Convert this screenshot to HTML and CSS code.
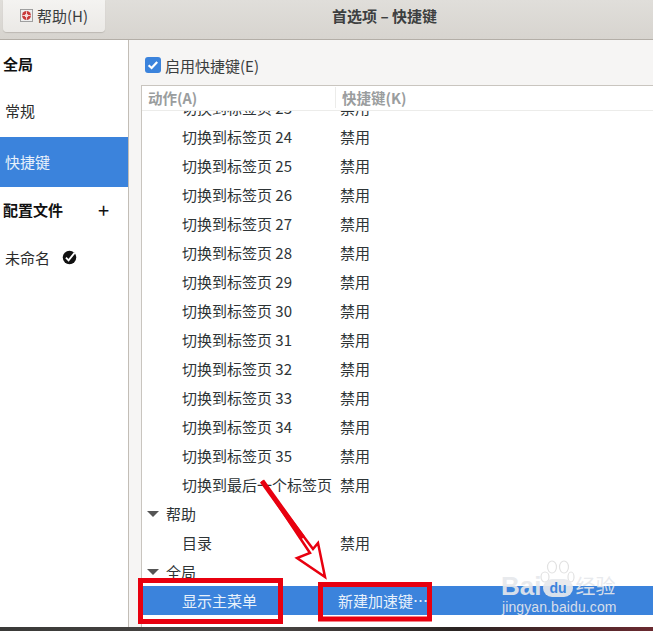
FILE: index.html
```html
<!DOCTYPE html>
<html lang="zh">
<head>
<meta charset="utf-8">
<title>首选项 – 快捷键</title>
<link rel="stylesheet" href="styles.css">
</head>
<body>
<div class="window">
  <header class="titlebar">
    <button class="help-btn">
      <svg class="help-icon" viewBox="0 0 14 14" width="14" height="14">
        <rect x="0.5" y="0.5" width="13" height="13" fill="#eee" stroke="#999"/>
        <circle cx="7" cy="7" r="4.8" fill="#c83a3a"/>
        <circle cx="7" cy="7" r="2" fill="#f4dada"/>
        <path d="M2.5 7h9M7 2.5v9" stroke="#f4dada" stroke-width="1"/>
      </svg>
      <span>帮助(H)</span>
    </button>
    <div class="title">首选项 – 快捷键</div>
  </header>
  <div class="main">
    <nav class="sidebar">
      <div class="side-head">全局</div>
      <div class="side-item general">常规</div>
      <div class="side-item selected">快捷键</div>
      <div class="side-head profile"><span>配置文件</span><span class="plus">+</span></div>
      <div class="side-item default">
        <span>未命名</span>
        <svg viewBox="0 0 16 16" width="15" height="15">
          <circle cx="8" cy="8" r="7.2" fill="#111"/>
          <path d="M4.2 8.2l2.8 2.8 6.4-8" fill="none" stroke="#fff" stroke-width="2"/>
        </svg>
      </div>
    </nav>
    <section class="content">
      <label class="enable">
        <span class="check">
          <svg viewBox="0 0 16 16" width="16" height="16"><path d="M3.6 8.2l3 2.8 5.6-6" fill="none" stroke="#fff" stroke-width="2.2"/></svg>
        </span>
        <span>启用快捷键(E)</span>
      </label>
      <div class="list">
        <div class="list-head">
          <div class="col-a">动作(A)</div>
          <div class="col-b">快捷键(K)</div>
        </div>
        <div class="list-body">
          <div class="rows">
            <div class="row"><span class="action">切换到标签页 23</span><span>禁用</span></div>
            <div class="row"><span class="action">切换到标签页 24</span><span>禁用</span></div>
            <div class="row"><span class="action">切换到标签页 25</span><span>禁用</span></div>
            <div class="row"><span class="action">切换到标签页 26</span><span>禁用</span></div>
            <div class="row"><span class="action">切换到标签页 27</span><span>禁用</span></div>
            <div class="row"><span class="action">切换到标签页 28</span><span>禁用</span></div>
            <div class="row"><span class="action">切换到标签页 29</span><span>禁用</span></div>
            <div class="row"><span class="action">切换到标签页 30</span><span>禁用</span></div>
            <div class="row"><span class="action">切换到标签页 31</span><span>禁用</span></div>
            <div class="row"><span class="action">切换到标签页 32</span><span>禁用</span></div>
            <div class="row"><span class="action">切换到标签页 33</span><span>禁用</span></div>
            <div class="row"><span class="action">切换到标签页 34</span><span>禁用</span></div>
            <div class="row"><span class="action">切换到标签页 35</span><span>禁用</span></div>
            <div class="row"><span class="action">切换到最后一个标签页</span><span>禁用</span></div>
            <div class="row group"><i class="tri"></i><span>帮助</span></div>
            <div class="row"><span class="action">目录</span><span>禁用</span></div>
            <div class="row group"><i class="tri"></i><span>全局</span></div>
            <div class="row active"><span class="action">显示主菜单</span><span class="accel">新建加速键…</span></div>
          </div>
        </div>
      </div>
    </section>
  </div>
  <div class="desktop"></div>
</div>

<svg class="annot" viewBox="0 0 653 631" width="653" height="631">
  <rect x="140.5" y="580.5" width="140" height="41" fill="none" stroke="#e8000f" stroke-width="5"/>
  <rect x="320.5" y="584.5" width="109" height="34.5" fill="none" stroke="#e8000f" stroke-width="5"/>
  <path d="M262 481 L310 553 L297 558 L325 577 L318 543 L313 549 Z" fill="#fff" fill-opacity="0.7" stroke="#e8000f" stroke-width="2.5"/>
  <path d="M262 481 L303 538" stroke="#e8000f" stroke-width="5"/>
</svg>

<div class="watermark">
  <svg class="paw" viewBox="0 0 36 24" width="36" height="24">
    <g fill="none" stroke="#e2e2e2" stroke-width="1.2">
      <ellipse cx="6" cy="17" rx="4" ry="5"/>
      <ellipse cx="13" cy="7" rx="4.5" ry="6"/>
      <ellipse cx="25" cy="7" rx="4.5" ry="6"/>
      <ellipse cx="32" cy="17" rx="3" ry="5"/>
    </g>
  </svg>
  <div class="wm-brand"><b>Bai</b><span class="wm-du">du</span><span class="wm-cn">经验</span></div>
  <div class="wm-url">jingyan.baidu.com</div>
</div>
</body>
</html>
```
FILE: styles.css
```css
* { box-sizing: border-box; }
html, body { margin: 0; padding: 0; }
body {
  width: 653px;
  height: 631px;
  overflow: hidden;
  position: relative;
  font-family: "Noto Sans CJK SC", "Noto Sans", sans-serif;
  font-size: 15px;
  color: #2e3436;
  background: #fff;
}
.window { display: flex; flex-direction: column; height: 631px; }
.titlebar {
  height: 40px;
  flex: none;
  display: flex;
  background: linear-gradient(#e0deda, #d7d4cf);
  border-bottom: 1px solid #b3aea7;
  position: relative;
}
.help-btn {
  width: 102px;
  height: 32px;
  margin-left: 3px;
  display: flex;
  align-items: center;
  gap: 4px;
  padding: 0 0 2px 17px;
  border: 0;
  border-radius: 0 0 4px 4px;
  background: linear-gradient(#f4f3f1, #ebe9e6);
  box-shadow: 0 1px 1px #bdb9b3;
  font: inherit;
  color: #3a3d3e;
}
.help-icon { flex: none; width: 13px; height: 13px; }
.title {
  position: absolute;
  left: 116px;
  right: 0;
  top: 6px;
  text-align: center;
  font-weight: 700;
  font-size: 15px;
  line-height: 20px;
  color: #3d3f40;
}
.main { flex: 1; display: flex; min-height: 0; }
.sidebar {
  width: 129px;
  flex: none;
  background: #fff;
  border-right: 1px solid #c2bdb6;
  color: #2b2b2b;
}
.side-head {
  height: 48px;
  padding: 0 4px 2px 3px;
  display: flex;
  align-items: center;
  font-weight: 700;
  color: #111;
}
.side-item {
  height: 49px;
  padding: 0 5px 2px;
  display: flex;
  align-items: center;
}
.side-item.general { padding-bottom: 4px; }
.side-item.selected { height: 50px; background: #3b83dc; color: #e8f1fb; }
.side-head.profile { height: 47px; justify-content: space-between; padding-right: 19px; }
.plus { font-size: 20px; font-weight: 400; line-height: 1; }
.side-item.default { gap: 12px; height: 48px; }
.default svg { margin-top: 1px; }
.content {
  flex: 1;
  min-width: 0;
  background: #f6f5f4;
  padding: 0 0 0 12px;
  display: flex;
  flex-direction: column;
}
.enable {
  height: 45px;
  flex: none;
  display: flex;
  align-items: center;
  gap: 4px;
  padding: 5px 0 0 4px;
  color: #3a3d3e;
}
.check {
  width: 16px;
  height: 16px;
  border-radius: 3px;
  background: #3b83dc;
  display: block;
}
.check svg { display: block; }
.list {
  flex: 1;
  min-height: 0;
  display: flex;
  flex-direction: column;
  background: #fff;
  border-left: 1px solid #c9c5bf;
  border-top: 1px solid #c9c5bf;
}
.list-head {
  height: 25px;
  flex: none;
  display: flex;
  align-items: center;
  padding-bottom: 2px;
  border-bottom: 1px solid #ececea;
  font-weight: 700;
  font-size: 14.5px;
  color: #9a9d9e;
}
.col-a { width: 194px; padding-left: 6px; border-right: 1px solid #ececea; }
.col-b { padding-left: 6px; }
.list-body { flex: 1; min-height: 0; overflow: hidden; }
.rows { margin-top: -18px; }
.row {
  height: 29px;
  display: flex;
  align-items: center;
  color: #2e3436;
}
.action { width: 198px; padding-left: 40px; flex: none; white-space: nowrap; }
.group { padding-left: 5px; gap: 7px; }
.tri {
  display: block;
  width: 0;
  height: 0;
  border-left: 6px solid transparent;
  border-right: 6px solid transparent;
  border-top: 6px solid #555;
}
.active { background: #3b83dc; color: #e8f1fb; margin-bottom: 11px; }
.accel { margin-left: -2px; }
.desktop {
  height: 4px;
  flex: none;
  background: linear-gradient(90deg, #3a3a38, #4a4644 40%, #2a2422 70%, #6a2a30);
}
.annot { position: absolute; left: 0; top: 0; pointer-events: none; }
.watermark {
  position: absolute;
  left: 500px;
  top: 556px;
  width: 150px;
  height: 70px;
  color: rgba(230, 232, 236, 0.92);
}
.paw { position: absolute; left: 39px; top: 4px; }
.wm-brand {
  position: absolute;
  left: 1px;
  top: 17px;
  display: flex;
  align-items: center;
  font-family: "Liberation Sans", sans-serif;
  font-size: 26px;
  line-height: 26px;
  font-weight: 700;
}
.wm-du {
  font-size: 14px;
  line-height: 18px;
  margin: 4px 3px 0 2px;
  background: rgba(230, 232, 236, 0.92);
  color: #3b83dc;
  border-radius: 9px;
  padding: 0 6px;
}
.wm-cn { font-family: "Noto Sans CJK SC", sans-serif; font-size: 20px; font-weight: 400; }
.wm-url {
  position: absolute;
  left: 2px;
  top: 41px;
  font-family: "Liberation Sans", sans-serif;
  font-size: 14px;
  line-height: 20px;
  letter-spacing: 0.1px;
  white-space: nowrap;
}
```
